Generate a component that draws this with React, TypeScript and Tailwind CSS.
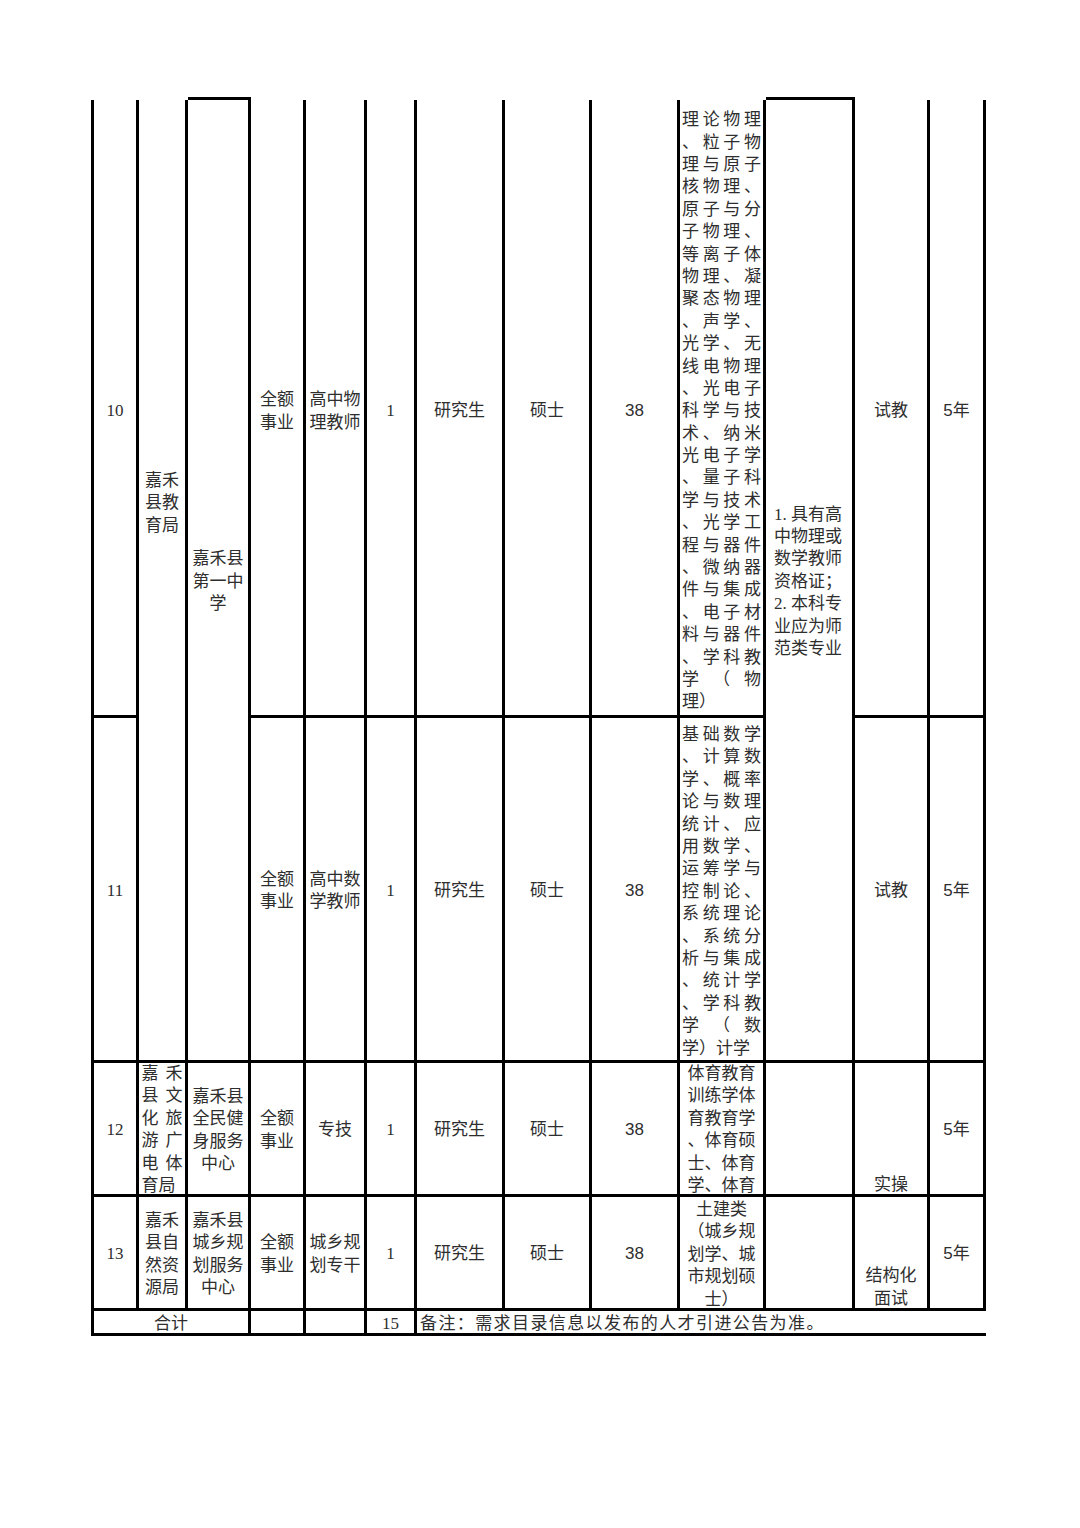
import React from "react";

const base =
  "border-r-[3px] border-b-[3px] border-black flex items-center justify-center text-center overflow-hidden min-h-0 min-w-0";
const ctr = `${base} pt-[4px]`;
const ctr10 = `${base} pt-[8px] mt-[3px]`;
const top2 = `${base} !items-start pt-[2px]`;
const top0 = `${base} !items-start`;
const bot = `${base} !items-end`;

const sans = "font-['Liberation_Sans','Noto_Sans_CJK_SC',sans-serif]";

const lines10 = [
  "理论物理", "、粒子物", "理与原子", "核物理、", "原子与分", "子物理、", "等离子体",
  "物理、凝", "聚态物理", "、声学、", "光学、无", "线电物理", "、光电子", "科学与技",
  "术、纳米", "光电子学", "、量子科", "学与技术", "、光学工", "程与器件", "、微纳器",
  "件与集成", "、电子材", "料与器件", "、学科教", "学（物", "理）",
];

const lines11 = [
  "基础数学", "、计算数", "学、概率", "论与数理", "统计、应", "用数学、", "运筹学与",
  "控制论、", "系统理论", "、系统分", "析与集成", "、统计学", "、学科教", "学（数", "学）计学",
];

const lines12a = ["嘉禾", "县文", "化旅", "游广", "电体", "育局"];

function JLine({ t, last, wide }: { t: string; last?: boolean; wide: boolean }) {
  return (
    <div
      className={`flex h-[22.4px] items-center ${wide ? "w-[79px]" : "w-[41px]"} ${
        last ? "justify-start" : "justify-between"
      }`}
    >
      {Array.from(t).map((c, i) => (
        <span key={i}>{c}</span>
      ))}
    </div>
  );
}

function Lines({ items, wide }: { items: string[]; wide: boolean }) {
  return (
    <div className="flex flex-col">
      {items.map((t, i) => (
        <JLine key={i} t={t} wide={wide} last={i === items.length - 1} />
      ))}
    </div>
  );
}

function Five() {
  return (
    <>
      <span className={sans}>5</span>年
    </>
  );
}

export default function App() {
  return (
    <div className="w-[1080px] min-h-[1528px] bg-white text-[#2e2e2e] text-[17px] leading-[22.4px] font-['Liberation_Serif','Noto_Sans_CJK_SC',serif]">
      <div className="pl-[91px] pt-[97px]">
        <div className="grid grid-cols-[48px_49px_63px_55px_61px_50px_88px_87px_88px_86px_89px_75px_56px] grid-rows-[621px_345px_134px_114px_25px]">
          {/* Row 10 */}
          <div className={`${ctr10} border-l-[3px]`}>10</div>
          <div className="row-span-2 border-r-[3px] border-b-[3px] border-black mt-[3px] flex justify-center items-start pt-[370px] text-center overflow-hidden">
            <div>
              嘉禾<br />县教<br />育局
            </div>
          </div>
          <div className={`row-span-2 ${ctr} border-t-[3px]`}>
            <div>
              嘉禾县<br />第一中<br />学
            </div>
          </div>
          <div className={ctr10}>
            <div>
              全额<br />事业
            </div>
          </div>
          <div className={ctr10}>
            <div>
              高中物<br />理教师
            </div>
          </div>
          <div className={ctr10}>1</div>
          <div className={ctr10}>研究生</div>
          <div className={ctr10}>硕士</div>
          <div className={`${ctr10} ${sans}`}>38</div>
          <div className={ctr10}>
            <Lines items={lines10} wide />
          </div>
          <div className={`row-span-2 ${ctr} border-t-[3px]`}>
            <div className="w-[70px] text-left">
              1. 具有高<br />中物理或<br />数学教师<br />资格证；<br />2. 本科专<br />业应为师<br />范类专业
            </div>
          </div>
          <div className={ctr10}>试教</div>
          <div className={ctr10}>
            <Five />
          </div>

          {/* Row 11 */}
          <div className={`${ctr} border-l-[3px]`}>11</div>
          <div className={ctr}>
            <div>
              全额<br />事业
            </div>
          </div>
          <div className={ctr}>
            <div>
              高中数<br />学教师
            </div>
          </div>
          <div className={ctr}>1</div>
          <div className={ctr}>研究生</div>
          <div className={ctr}>硕士</div>
          <div className={`${ctr} ${sans}`}>38</div>
          <div className={`${base} pt-[6px]`}>
            <Lines items={lines11} wide />
          </div>
          <div className={ctr}>试教</div>
          <div className={ctr}>
            <Five />
          </div>

          {/* Row 12 */}
          <div className={`${ctr} border-l-[3px]`}>12</div>
          <div className={top0}>
            <Lines items={lines12a} wide={false} />
          </div>
          <div className={ctr}>
            <div>
              嘉禾县<br />全民健<br />身服务<br />中心
            </div>
          </div>
          <div className={ctr}>
            <div>
              全额<br />事业
            </div>
          </div>
          <div className={ctr}>专技</div>
          <div className={ctr}>1</div>
          <div className={ctr}>研究生</div>
          <div className={ctr}>硕士</div>
          <div className={`${ctr} ${sans}`}>38</div>
          <div className={top0}>
            <div>
              体育教育<br />训练学体<br />育教育学<br />、体育硕<br />士、体育<br />学、体育
            </div>
          </div>
          <div className={base}></div>
          <div className={bot}>
            <div className="-mb-[2px]">实操</div>
          </div>
          <div className={ctr}>
            <Five />
          </div>

          {/* Row 13 */}
          <div className={`${ctr} border-l-[3px]`}>13</div>
          <div className={ctr}>
            <div>
              嘉禾<br />县自<br />然资<br />源局
            </div>
          </div>
          <div className={ctr}>
            <div>
              嘉禾县<br />城乡规<br />划服务<br />中心
            </div>
          </div>
          <div className={ctr}>
            <div>
              全额<br />事业
            </div>
          </div>
          <div className={ctr}>
            <div>
              城乡规<br />划专干
            </div>
          </div>
          <div className={ctr}>1</div>
          <div className={ctr}>研究生</div>
          <div className={ctr}>硕士</div>
          <div className={`${ctr} ${sans}`}>38</div>
          <div className={top2}>
            <div>
              土建类<br />（城乡规<br />划学、城<br />市规划硕<br />士）
            </div>
          </div>
          <div className={base}></div>
          <div className={bot}>
            <div className="-mb-[2px]">
              结构化<br />面试
            </div>
          </div>
          <div className={ctr}>
            <Five />
          </div>

          {/* Total row */}
          <div className={`col-span-3 ${ctr} border-l-[3px]`}>合计</div>
          <div className={base}></div>
          <div className={base}></div>
          <div className={ctr}>15</div>
          <div className="col-span-7 border-b-[3px] border-black flex items-center justify-start pl-[3px] pt-[4px] tracking-[1.4px] whitespace-nowrap overflow-hidden">
            备注：需求目录信息以发布的人才引进公告为准。
          </div>
        </div>
      </div>
    </div>
  );
}
